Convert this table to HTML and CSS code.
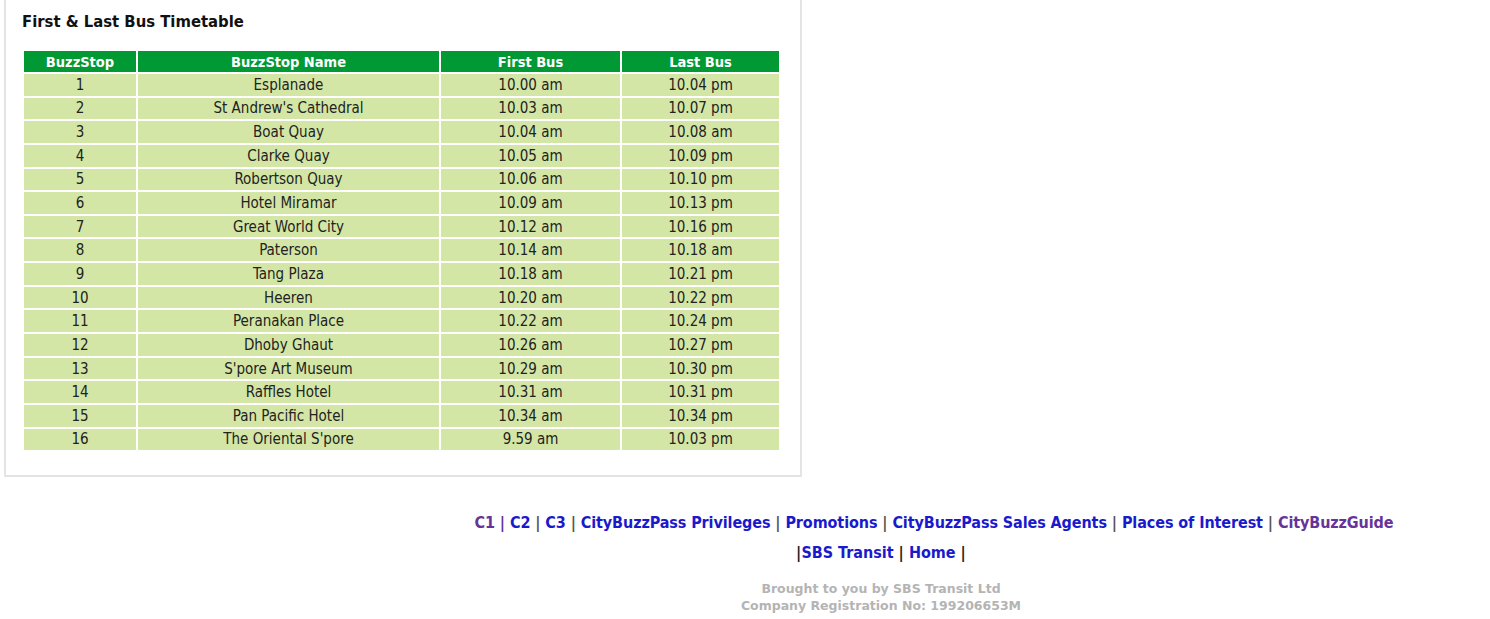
FILE: index.html
```html
<!DOCTYPE html>
<html>
<head>
<meta charset="utf-8">
<link rel="stylesheet" href="styles.css">
</head>
<body>
<div class="panel">
  <h2 class="title">First &amp; Last Bus Timetable</h2>
  <table class="tt">
    <thead>
      <tr><th class="c1">BuzzStop</th><th class="c2">BuzzStop Name</th><th class="c3">First Bus</th><th class="c4">Last Bus</th></tr>
    </thead>
    <tbody>
      <tr><td>1</td><td>Esplanade</td><td>10.00 am</td><td>10.04 pm</td></tr>
      <tr><td>2</td><td>St Andrew's Cathedral</td><td>10.03 am</td><td>10.07 pm</td></tr>
      <tr><td>3</td><td>Boat Quay</td><td>10.04 am</td><td>10.08 am</td></tr>
      <tr><td>4</td><td>Clarke Quay</td><td>10.05 am</td><td>10.09 pm</td></tr>
      <tr><td>5</td><td>Robertson Quay</td><td>10.06 am</td><td>10.10 pm</td></tr>
      <tr><td>6</td><td>Hotel Miramar</td><td>10.09 am</td><td>10.13 pm</td></tr>
      <tr><td>7</td><td>Great World City</td><td>10.12 am</td><td>10.16 pm</td></tr>
      <tr><td>8</td><td>Paterson</td><td>10.14 am</td><td>10.18 am</td></tr>
      <tr><td>9</td><td>Tang Plaza</td><td>10.18 am</td><td>10.21 pm</td></tr>
      <tr><td>10</td><td>Heeren</td><td>10.20 am</td><td>10.22 pm</td></tr>
      <tr><td>11</td><td>Peranakan Place</td><td>10.22 am</td><td>10.24 pm</td></tr>
      <tr><td>12</td><td>Dhoby Ghaut</td><td>10.26 am</td><td>10.27 pm</td></tr>
      <tr><td>13</td><td>S'pore Art Museum</td><td>10.29 am</td><td>10.30 pm</td></tr>
      <tr><td>14</td><td>Raffles Hotel</td><td>10.31 am</td><td>10.31 pm</td></tr>
      <tr><td>15</td><td>Pan Pacific Hotel</td><td>10.34 am</td><td>10.34 pm</td></tr>
      <tr><td>16</td><td>The Oriental S'pore</td><td>9.59 am</td><td>10.03 pm</td></tr>
    </tbody>
  </table>
</div>
<div class="footer">
  <div class="nav nav1">
    <a class="visited" href="#">C1 |</a> <a href="#">C2</a> <span class="sep">|</span> <a href="#">C3</a> <span class="sep">|</span> <a href="#">CityBuzzPass Privileges</a> <span class="sep">|</span> <a href="#">Promotions</a> <span class="sep">|</span> <a href="#">CityBuzzPass Sales Agents</a> <span class="sep">|</span> <a href="#">Places of Interest</a> <span class="sep">|</span> <a class="visited" href="#">CityBuzzGuide</a>
  </div>
  <div class="nav nav2">
    <span class="sep2">|</span><a href="#">SBS Transit</a> <span class="sep2">|</span> <a href="#">Home</a> <span class="sep2">|</span>
  </div>
  <div class="credit">Brought to you by SBS Transit Ltd<br>Company Registration No: 199206653M</div>
</div>
</body>
</html>
```
FILE: styles.css
```css
html, body {
  margin: 0;
  padding: 0;
  background: #fff;
}
body {
  font-family: "DejaVu Sans Condensed", "DejaVu Sans", sans-serif;
  color: #222;
}
.panel {
  margin-left: 4px;
  width: 794px;
  border: 2px solid #e4e4e4;
  border-top: none;
  padding: 13px 0 23px 0;
  margin-top: -2px;
}
.title {
  margin: 0 0 16px 16px;
  font-size: 16.5px;
  font-weight: bold;
  color: #111;
  line-height: 22px;
}
.tt {
  margin-left: 16px;
  border-collapse: separate;
  border-spacing: 2px;
  width: 759px;
  font-size: 15px;
}
.tt th {
  background: #009933;
  color: #fff;
  font-weight: bold;
  height: 21px;
  padding: 0;
  text-align: center;
  font-size: 14.5px;
}
.tt td {
  background: #d4e6a5;
  height: 21.65px;
  padding: 0;
  text-align: center;
  color: #222;
}
.c1 { width: 112px; }
.c2 { width: 301px; }
.c3 { width: 179px; }
.c4 { width: 157px; }
.footer {
  margin-left: 272px;
  width: 1218px;
  text-align: center;
  padding-top: 31px;
}
.nav {
  font-size: 16px;
  font-weight: bold;
  line-height: 30px;
}
.nav1 {
  padding-left: 106px;
  letter-spacing: -0.1px;
}
.nav a {
  color: #1a1acc;
  text-decoration: none;
}
.nav a.visited {
  color: #663399;
}
.sep { color: #555; }
.sep2 { color: #222; }
.credit {
  margin-top: 12px;
  font-family: "DejaVu Sans", sans-serif;
  font-size: 12.5px;
  font-weight: bold;
  color: #b4b4b4;
  line-height: 17px;
}
```
